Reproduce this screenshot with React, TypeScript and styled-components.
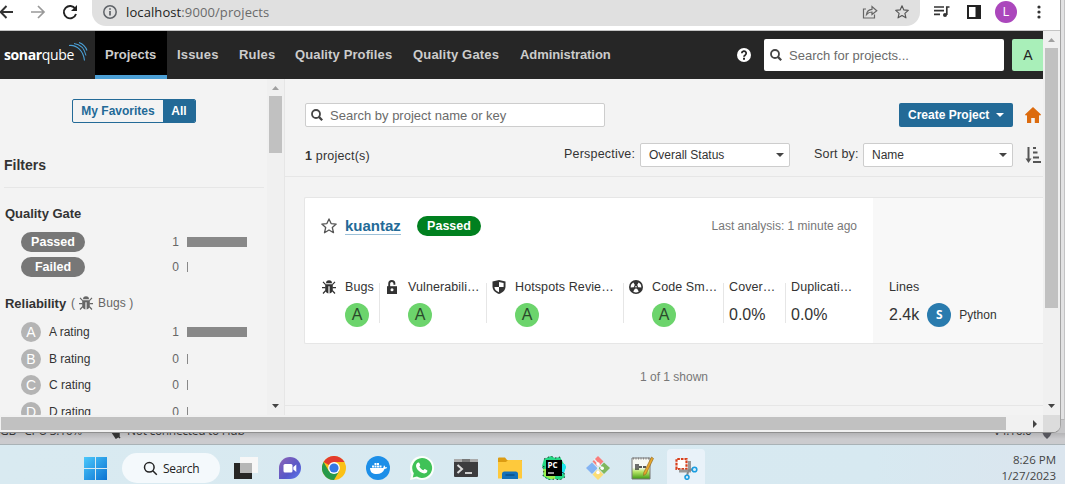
import React from "react";
import styled, { createGlobalStyle, css } from "styled-components";

const Global = createGlobalStyle`
  * { box-sizing: border-box; }
  html, body { margin: 0; padding: 0; overflow: hidden; }
  body { font-family: "Liberation Sans", Arial, sans-serif; font-size: 13px; color: #333; }
  svg { display: block; flex: none; }
`;

const Desktop = styled.div`
  width: 1065px;
  height: 484px;
  display: flex;
  flex-direction: column;
  overflow: hidden;
  background: #c9c9cb;
`;

const WindowRow = styled.div`
  height: 433px;
  flex: none;
  display: flex;
  background: linear-gradient(#d9d9da 0 419px, #c6c6c8 420px);
`;

const BrowserWindow = styled.div`
  width: 1061px;
  height: 433px;
  display: flex;
  flex-direction: column;
  overflow: hidden;
  background: #f1f1f1;
  border-right: 1px solid #a3a3a3;
  border-bottom: 1px solid #8f8f8f;
  border-bottom-right-radius: 8px;
`;

const BackWindowEdge = styled.div`
  width: 4px;
  height: 420px;
  background: #e2e2e3;
  border-right: 1px solid #c3c3c4;
  border-bottom: 1px solid #b5b5b6;
`;

/* Browser toolbar */
const Toolbar = styled.div`
  height: 31px;
  flex: none;
  display: flex;
  align-items: flex-start;
  background: #fff;
  border-bottom: 1px solid #c4c4c4;
`;

const NavButtons = styled.div`
  width: 92px;
  height: 24px;
  display: flex;
  align-items: center;
`;

const AddressBar = styled.div`
  width: 828px;
  height: 26px;
  display: flex;
  align-items: center;
  padding: 0 11px 2px 11px;
  background: #e0e0e0;
  border-radius: 0 0 14px 14px;
`;

const Url = styled.span`
  margin-left: 9px;
  flex: 1;
  font-family: "Open Sans", sans-serif;
  font-size: 13px;
  letter-spacing: 0.1px;
  color: #6a6a6a;
  b { font-weight: 400; color: #222; }
`;

const ToolbarIcons = styled.div`
  flex: 1;
  height: 24px;
  display: flex;
  align-items: center;
  padding-left: 13px;
`;

const Profile = styled.span`
  width: 22px;
  height: 22px;
  margin: 0 20px 0 14px;
  border-radius: 50%;
  background: #ab47bc;
  color: #fff;
  font: 12px/22px Roboto, sans-serif;
  text-align: center;
`;

/* Page */
const PageRow = styled.div`
  height: 384px;
  flex: none;
  display: flex;
`;

const Page = styled.div`
  width: 1043px;
  flex: none;
  display: flex;
  flex-direction: column;
  overflow: hidden;
  background: #f3f3f3;
`;

const Header = styled.header`
  height: 48px;
  flex: none;
  display: flex;
  align-items: center;
  background: #262626;
`;

const Logo = styled.div`
  width: 95px;
  height: 48px;
  flex: none;
  display: flex;
  padding: 11px 0 0 4px;
  color: #fff;
  font: 14px/26px "Open Sans", sans-serif;
  letter-spacing: -0.3px;
  b { font-weight: 700; letter-spacing: -0.4px; }
  svg { margin-left: -6px; }
`;

const NavItem = styled.a<{ $active?: boolean; $w: number; $ls?: number }>`
  width: ${(p) => p.$w}px;
  height: 48px;
  flex: none;
  padding-left: 10px;
  line-height: 47px;
  font-weight: 700;
  letter-spacing: ${(p) => p.$ls ?? 0.18}px;
  white-space: nowrap;
  color: #ccc;
  ${(p) => p.$active && css`background: #000; border-bottom: 4px solid #4b9fd5;`}
`;

const HeaderTools = styled.div`
  flex: none;
  margin-left: auto;
  margin-right: -1px;
  display: flex;
  align-items: center;
`;

const SearchInput = styled.div<{ $w: number; $h: number; $bordered?: boolean }>`
  width: ${(p) => p.$w}px;
  height: ${(p) => p.$h}px;
  display: flex;
  align-items: center;
  gap: 7px;
  padding-left: ${(p) => (p.$bordered ? 5 : 6)}px;
  background: #fff;
  border: ${(p) => (p.$bordered ? "1px solid #cdcdcd" : "none")};
  border-radius: 2px;
  color: #6b6b6b;
`;

const Avatar = styled.span`
  width: 32px;
  height: 32px;
  margin-left: 8px;
  border-radius: 2px;
  background: #a9efb9;
  color: #222;
  font-size: 14px;
  line-height: 32px;
  text-align: center;
`;

const Body = styled.div`
  flex: 1;
  min-height: 0;
  display: flex;
`;

const Sidebar = styled.aside`
  width: 267px;
  flex: none;
  overflow: hidden;
  padding: 20px 3px 0 4px;
`;

const Toggle = styled.div`
  display: flex;
  width: 124px;
  height: 24px;
  margin-left: 68px;
  border: 1px solid #236a97;
  border-radius: 2px;
  overflow: hidden;
  font-size: 12px;
  font-weight: 700;
  line-height: 22px;
  text-align: center;
`;

const ToggleOption = styled.span<{ $on?: boolean }>`
  width: ${(p) => (p.$on ? 32 : 90)}px;
  background: ${(p) => (p.$on ? "#236a97" : "transparent")};
  color: ${(p) => (p.$on ? "#fff" : "#236a97")};
`;

const FiltersTitle = styled.h2`
  height: 65px;
  margin: 0 0 15px;
  padding-top: 34px;
  border-bottom: 1px solid #e6e6e6;
  font-size: 14px;
  line-height: 16px;
`;

const FacetTitle = styled.h3<{ $top?: number }>`
  display: flex;
  align-items: center;
  height: 20px;
  margin: ${(p) => p.$top ?? 0}px 0 0 1px;
  font-size: 13px;
  letter-spacing: -0.03px;
  span { margin-left: 5px; font-weight: 400; font-size: 12px; color: #666; }
  span + svg { margin: 0 5px 0 4px; }
  svg + span { margin-left: 0; letter-spacing: 0.1px; }
`;

const FacetRow = styled.div<{ $h: number }>`
  height: ${(p) => p.$h}px;
  display: flex;
  align-items: center;
  padding-left: 17px;
  font-size: 12px;
`;

const FacetLabel = styled.div`
  width: 138px;
  display: flex;
  align-items: center;
  gap: 8px;
`;

const FacetCount = styled.span`
  width: 20px;
  text-align: right;
  color: #666;
`;

const FacetBar = styled.span<{ $full?: boolean }>`
  width: ${(p) => (p.$full ? 60 : 1)}px;
  height: 10px;
  margin-left: 8px;
  background: #888;
`;

const Pill = styled.span<{ $green?: boolean }>`
  width: 64px;
  height: 20px;
  border-radius: 10px;
  background: ${(p) => (p.$green ? "#00801f" : "#777")};
  color: #fff;
  font-size: 12.5px;
  font-weight: 700;
  line-height: 20px;
  text-align: center;
`;

const Rating = styled.span<{ $size: number; $muted?: boolean }>`
  width: ${(p) => p.$size}px;
  height: ${(p) => p.$size}px;
  flex: none;
  border-radius: 50%;
  background: ${(p) => (p.$muted ? "#b4b4b4" : "#6cd46c")};
  color: ${(p) => (p.$muted ? "#fff" : "#2b4a2b")};
  font-size: ${(p) => (p.$muted ? 14 : 16)}px;
  line-height: ${(p) => p.$size}px;
  text-align: center;
`;

/* Scrollbars */
const VTrack = styled.div`
  width: 17px;
  flex: none;
  display: flex;
  flex-direction: column;
  align-items: center;
  justify-content: space-between;
  padding: 7px 0;
  background: #f0f0f0;
`;

const VThumb = styled.div<{ $h: number }>`
  width: 13px;
  height: ${(p) => p.$h}px;
  margin: 6px 0 auto;
  background: #c1c1c1;
`;

const HScroll = styled.div`
  height: 17px;
  flex: none;
  display: flex;
  align-items: center;
  padding-left: 1px;
`;

const HThumb = styled.div`
  width: 1005px;
  height: 13px;
  background: #c1c1c1;
`;

const ScrollCorner = styled.div`
  width: 17px;
  height: 17px;
  margin-left: auto;
  background: #dcdcdc;
`;

/* Main column */
const Main = styled.main`
  flex: 1;
  min-width: 0;
  border-left: 1px solid #e6e6e6;
  overflow: hidden;
`;

const TopBar = styled.div`
  height: 98px;
  padding: 24px 2px 0 20px;
  border-bottom: 1px solid #e6e6e6;
`;

const BarRow = styled.div`
  height: 24px;
  display: flex;
  align-items: center;
  margin-bottom: 16px;
`;

const CreateButton = styled.button`
  width: 114px;
  height: 24px;
  margin: 0 12px 0 auto;
  padding: 0 9px;
  display: flex;
  align-items: center;
  justify-content: space-between;
  border: 0;
  border-radius: 2px;
  background: #236a97;
  color: #fff;
  font: 700 12px "Liberation Sans", Arial, sans-serif;
  white-space: nowrap;
`;

const ProjectCount = styled.span`
  flex: 1;
  padding-top: 1px;
  font-size: 12.5px;
  letter-spacing: 0.2px;
`;

const FieldLabel = styled.label<{ $w: number }>`
  width: ${(p) => p.$w}px;
  flex: none;
  font-size: 12.5px;
  letter-spacing: 0.2px;
  margin: -2px 2px 0 24px;
  white-space: nowrap;
`;

const Select = styled.div`
  width: 150px;
  height: 24px;
  display: flex;
  align-items: center;
  justify-content: space-between;
  padding: 0 5px 0 8px;
  border: 1px solid #cdcdcd;
  border-radius: 2px;
  background: #fff;
  font-size: 12px;
`;

const Card = styled.article`
  height: 147px;
  margin: 20px 0 0 19px;
  display: flex;
  border: 1px solid #e6e6e6;
  border-right: 0;
  border-radius: 2px 0 0 2px;
  background: #fff;
`;

const CardMain = styled.div`
  width: 568px;
  flex: none;
  padding: 18px 16px 0;
`;

const CardTitle = styled.div`
  height: 20px;
  display: flex;
  align-items: center;
`;

const ProjectLink = styled.a`
  width: 56px;
  margin: 1px 16px 0 8px;
  height: 17px;
  font-size: 15px;
  line-height: 16px;
  font-weight: 700;
  color: #236a97;
  border-bottom: 1px solid #9cc0d8;
`;

const LastAnalysis = styled.span`
  margin-left: auto;
  font-size: 12px;
  color: #777;
`;

const Measures = styled.div`
  display: flex;
  margin-top: 42px;
`;

const Measure = styled.div<{ $w: number; $pad: number; $last?: boolean }>`
  width: ${(p) => p.$w}px;
  height: 50px;
  flex: none;
  display: flex;
  padding-left: ${(p) => p.$pad}px;
  background: ${(p) => (p.$last ? "none" : "linear-gradient(#e6e6e6, #e6e6e6) right 5px / 1px 40px no-repeat")};
  > svg { margin-top: 2px; }
`;

const MeasureBody = styled.div<{ $indent: number }>`
  margin-left: ${(p) => p.$indent}px;
`;

const MeasureName = styled.div`
  height: 17px;
  margin-bottom: 8px;
  line-height: 18px;
  font-size: 12.5px;
  letter-spacing: 0.1px;
  white-space: nowrap;
`;

const MeasureValue = styled.div`
  height: 24px;
  display: flex;
  align-items: center;
  font-size: 16px;
`;

const CardSide = styled.div`
  flex: 1;
  padding: 80px 0 0 16px;
  background: #f8f8f8;
`;

const LangBadge = styled.span`
  width: 24px;
  height: 24px;
  margin: 0 8px;
  border-radius: 50%;
  background: #297bae;
  color: #fff;
  font: 700 12px/24px "Noto Sans", sans-serif;
  text-align: center;
`;

const LangName = styled.span`
  font-size: 12px;
`;

const Shown = styled.div`
  height: 62px;
  padding: 25px 0 0 20px;
  border-bottom: 1px solid #e6e6e6;
  line-height: 16px;
  font-size: 12px;
  text-align: center;
  color: #777;
`;

/* Behind the browser, and the taskbar */
const StatusStrip = styled.div`
  height: 12px;
  flex: none;
  display: flex;
  overflow: hidden;
  background: linear-gradient(#b4b4b6, #cbcbce 6px);
  border-bottom: 1px solid #a9b2b6;
  font: 12px/16px "Open Sans", sans-serif;
  letter-spacing: -0.3px;
  color: #333;
  white-space: pre;
`;

const StripItem = styled.span<{ $w: number }>`
  display: flex;
  width: ${(p) => p.$w}px;
  flex: none;
  margin-top: -10px;
  height: 16px;
`;

const Taskbar = styled.footer`
  flex: 1;
  display: flex;
  align-items: flex-start;
  padding: 4px 9px 0 73px;
  background: linear-gradient(90deg, #d9eaf1 0, #d7e9f1 82%, #dbe5ee 100%);
`;

const Slot = styled.div<{ $active?: boolean }>`
  width: ${(p) => (p.$active ? 38 : 44)}px;
  height: 38px;
  margin: ${(p) => (p.$active ? "0 3px" : "0")};
  display: flex;
  align-items: center;
  justify-content: center;
  border-radius: 4px 4px 0 0;
  background: ${(p) => (p.$active ? "#e9f2f9" : "none")};
`;

const TaskSearch = styled.div`
  width: 98px;
  height: 30px;
  margin: 4px 4px 0 5px;
  display: flex;
  align-items: center;
  padding-left: 21px;
  gap: 5px;
  border-radius: 15px;
  background: #f4f9fc;
  color: #222;
  font: 12px "Open Sans", sans-serif;
  letter-spacing: -0.3px;
`;

const Clock = styled.div`
  margin-left: auto;
  padding-top: 3px;
  text-align: right;
  color: #444;
  font: 11.5px/16px "Open Sans", sans-serif;
`;

const Glass = ({ size = 12, color = "#444" }: { size?: number; color?: string }) => (
  <svg width={size} height={size} viewBox="0 0 12 12" fill="none" stroke={color} strokeWidth="1.800">
    <circle cx="5" cy="5" r="4" />
    <path d="M7.900 7.900L11.200 11.200" strokeWidth="2.200" />
  </svg>
);

const Caret = ({ color = "#444" }: { color?: string }) => (
  <svg width="8" height="4" viewBox="0 0 8 4"><path d="M0 0h8L4 4z" fill={color} /></svg>
);

const Arrow = ({ up, color }: { up?: boolean; color: string }) => (
  <svg width="7" height="4" viewBox="0 0 7 4"><path d={up ? "M0 4L3.5 0L7 4z" : "M0 0h7L3.5 4z"} fill={color} /></svg>
);

const Bug = ({ color = "#333" }: { color?: string }) => (
  <svg width="14" height="14" viewBox="0 0 14 14" fill={color}>
    <path d="M4 3.200a3 3 0 0 1 6 0z" />
    <path d="M3.200 4.200h7.600v5.300c0 2.300-1.500 3.800-3.200 4V6.200H6.400v7.300c-1.700-.2-3.200-1.700-3.200-4z" />
    <path d="M1 1.800L3.600 4.600M13 1.800L10.400 4.600M0 7.600h3.500M14 7.600h-3.500M1 13.500l2.800-3M13 13.500l-2.800-3" stroke={color} strokeWidth="1.200" />
  </svg>
);

const Lock = () => (
  <svg width="12" height="14" viewBox="0 0 12 14">
    <path d="M3.200 7V3.600a2.600 2.600 0 0 1 5.200 0v1.200" fill="none" stroke="#333" strokeWidth="1.900" />
    <path d="M1 6.200h10v7.800H1z" fill="#333" />
    <circle cx="6" cy="9.800" r="1.500" fill="#fff" />
  </svg>
);

const Shield = () => (
  <svg width="14" height="14" viewBox="0 0 14 14">
    <path d="M7 0l6.500 1.600v5C13.500 10.200 10.500 13 7 14 3.500 13 .5 10.200.5 6.600v-5z" fill="#333" />
    <path d="M7 2v5h4.600V3zM7 7H2.400c.1 2.400 2 4.300 4.600 5.200z" fill="#fff" />
  </svg>
);

const Smell = () => (
  <svg width="14" height="14" viewBox="0 0 14 14">
    <circle cx="7" cy="7" r="7" fill="#333" />
    <path d="M7 7L1.700 7.500A5.300 5.300 0 0 1 4.400 2.400zM7 7l5.300.5A5.300 5.300 0 0 0 9.600 2.400zM7 7l-2.800 4.600a5.300 5.300 0 0 0 5.600 0z" fill="#fff" />
    <circle cx="7" cy="6.800" r="2" fill="#333" />
    <circle cx="7" cy="6.800" r=".8" fill="#fff" />
  </svg>
);

const Star = ({ size, color }: { size: number; color: string }) => (
  <svg width={size} height={size} viewBox="0 0 16 16" fill="none" stroke={color} strokeWidth="1.300" strokeLinejoin="round">
    <path d="M8 .9l2.100 4.700 5.100.5-3.900 3.400 1.200 5.200L8 12l-4.500 2.700 1.200-5.200L.8 6.100l5.100-.5z" />
  </svg>
);

const facets = [["A", 1], ["B", 0], ["C", 0], ["D", 0]] as const;

export default function App() {
  return (
    <>
      <Global />
      <Desktop>
        <WindowRow>
          <BrowserWindow>
            <Toolbar>
              <NavButtons>
                <svg width="92" height="24" viewBox="0 0 92 24" fill="none" strokeWidth="1.900">
                  <path d="M13 12H1M6.500 6L.7 12l5.800 6" stroke="#333" />
                  <path d="M31 12h13M38 6l6 6-6 6" stroke="#999" strokeWidth="1.700" />
                  <path d="M75.300 8.800A6.200 6.200 0 1 0 76 14" stroke="#222" />
                  <path d="M77 5v6h-6z" fill="#222" />
                </svg>
              </NavButtons>
              <AddressBar>
                <svg width="14" height="14" viewBox="0 0 14 14" fill="none" stroke="#5f6368" strokeWidth="1.500">
                  <circle cx="7" cy="7" r="6.200" /><path d="M7 6v4.500M7 3.300v1.500" strokeWidth="1.700" />
                </svg>
                <Url><b>localhost</b>:9000/projects</Url>
                <svg width="16" height="14" viewBox="0 0 16 14" fill="none" stroke="#666" strokeWidth="1.200">
                  <path d="M4 4H1.500v9h11V9.500" /><path d="M4.500 9.500C5 6 7 4.500 10 4.300V1.500L14.800 5.700 10 9.500V7C7.500 7 6 7.700 4.500 9.500z" />
                </svg>
                <svg width="17" height="1" />
                <Star size={14} color="#555" />
              </AddressBar>
              <ToolbarIcons>
                <svg width="18" height="14" viewBox="0 0 18 14" fill="none" stroke="#333" strokeWidth="1.700">
                  <path d="M1 2h10M1 5.700h10M1 9.400h6M16.500 2H13.800v8" /><circle cx="12" cy="10" r="2" fill="#333" stroke="none" />
                </svg>
                <svg width="16" height="1" />
                <svg width="14" height="14" viewBox="0 0 14 14"><path d="M0 0h14v14H0zM2 2v10h6.500V2z" fill="#222" fillRule="evenodd" /></svg>
                <Profile>L</Profile>
                <svg width="4" height="14" viewBox="0 0 4 14" fill="#333"><circle cx="2" cy="2" r="1.600" /><circle cx="2" cy="7" r="1.600" /><circle cx="2" cy="12" r="1.600" /></svg>
              </ToolbarIcons>
            </Toolbar>

            <PageRow>
              <Page>
                <Header>
                  <Logo>
                    <b>sonar</b>qube
                    <svg width="20" height="20" viewBox="0 0 20 20" fill="none" stroke="#4b9fd5" strokeWidth="1.100">
                      <path d="M1 3.500C9 2.500 15.500 9 16.500 18.500" /><path d="M6 1.500c6 .8 10.500 5 12 12" /><path d="M11 .5c3.800 1.400 6.500 4 8 8" />
                    </svg>
                  </Logo>
                  <NavItem $active $w={72} $ls={0}>Projects</NavItem>
                  <NavItem $w={62}>Issues</NavItem>
                  <NavItem $w={56}>Rules</NavItem>
                  <NavItem $w={118} $ls={0.12}>Quality Profiles</NavItem>
                  <NavItem $w={107}>Quality Gates</NavItem>
                  <NavItem $w={112} $ls={-0.08}>Administration</NavItem>
                  <HeaderTools>
                    <svg width="27" height="14" viewBox="0 0 27 14">
                      <circle cx="7" cy="7" r="7" fill="#fff" />
                      <path d="M4.800 5.300a2.200 2.200 0 1 1 3.300 1.900C7.300 7.700 7 8 7 8.700" fill="none" stroke="#262626" strokeWidth="1.800" />
                      <path d="M6 9.800h2v1.900H6z" fill="#262626" />
                    </svg>
                    <SearchInput $w={240} $h={32}><Glass />Search for projects...</SearchInput>
                    <Avatar>A</Avatar>
                  </HeaderTools>
                </Header>
                <Body>
                  <Sidebar>
                    <Toggle>
                      <ToggleOption>My Favorites</ToggleOption>
                      <ToggleOption $on>All</ToggleOption>
                    </Toggle>
                    <FiltersTitle>Filters</FiltersTitle>
                    <FacetTitle>Quality Gate</FacetTitle>
                    <svg width="1" height="6" />
                    <FacetRow $h={25}><FacetLabel><Pill>Passed</Pill></FacetLabel><FacetCount>1</FacetCount><FacetBar $full /></FacetRow>
                    <FacetRow $h={25}><FacetLabel><Pill>Failed</Pill></FacetLabel><FacetCount>0</FacetCount><FacetBar /></FacetRow>
                    <FacetTitle $top={14}>Reliability <span>(</span><Bug color="#666" /><span>Bugs )</span></FacetTitle>
                    <svg width="1" height="6" />
                    {facets.map(([r, n]) => (
                      <FacetRow key={r} $h={26.5}>
                        <FacetLabel><Rating $size={20} $muted>{r}</Rating>{r} rating</FacetLabel>
                        <FacetCount>{n}</FacetCount>
                        <FacetBar $full={n > 0} />
                      </FacetRow>
                    ))}
                  </Sidebar>
                  <VTrack><Arrow up color="#a0a0a0" /><VThumb $h={57} /><Arrow color="#444" /></VTrack>
                  <Main>
                    <TopBar>
                      <BarRow>
                        <SearchInput $w={300} $h={24} $bordered><Glass />Search by project name or key</SearchInput>
                        <CreateButton>Create Project <Caret color="#fff" /></CreateButton>
                        <svg width="16" height="16" viewBox="0 0 16 16" fill="#dc6b0e"><path d="M8 0l8 7.500-1 1.300-1-.7V16H9.800v-5H6.200v5H2V8.100l-1 .7-1-1.300z" /></svg>
                      </BarRow>
                      <BarRow>
                        <ProjectCount><b>1</b> project(s)</ProjectCount>
                        <FieldLabel $w={74}>Perspective:</FieldLabel>
                        <Select>Overall Status<Caret /></Select>
                        <FieldLabel $w={47}>Sort by:</FieldLabel>
                        <Select>Name<Caret /></Select>
                        <svg width="28" height="16" viewBox="0 0 28 16" fill="none" stroke="#555" strokeWidth="2">
                          <path d="M15.500 0v14" /><path d="M12.500 11.500h6l-3 4.500z" fill="#555" stroke="none" /><path d="M20 1h3M20 5.500h4.500M20 10.500h6M20 15h8" strokeWidth="1.800" />
                        </svg>
                      </BarRow>
                    </TopBar>
                    <Card>
                      <CardMain>
                        <CardTitle>
                          <Star size={16} color="#555" />
                          <ProjectLink>kuantaz</ProjectLink>
                          <Pill $green>Passed</Pill>
                          <LastAnalysis>Last analysis: 1 minute ago</LastAnalysis>
                        </CardTitle>
                        <Measures>
                          <Measure $w={59} $pad={1}><Bug /><MeasureBody $indent={9}><MeasureName>Bugs</MeasureName><Rating as="div" $size={24}>A</Rating></MeasureBody></Measure>
                          <Measure $w={107} $pad={6}><Lock /><MeasureBody $indent={10}><MeasureName>Vulnerabili…</MeasureName><Rating as="div" $size={24}>A</Rating></MeasureBody></Measure>
                          <Measure $w={137} $pad={5}><Shield /><MeasureBody $indent={9}><MeasureName>Hotspots Revie…</MeasureName><Rating as="div" $size={24}>A</Rating></MeasureBody></Measure>
                          <Measure $w={100} $pad={5}><Smell /><MeasureBody $indent={9}><MeasureName>Code Sm…</MeasureName><Rating as="div" $size={24}>A</Rating></MeasureBody></Measure>
                          <Measure $w={62} $pad={5}><MeasureBody $indent={0}><MeasureName>Cover…</MeasureName><MeasureValue>0.0%</MeasureValue></MeasureBody></Measure>
                          <Measure $w={70} $pad={5} $last><MeasureBody $indent={0}><MeasureName>Duplicati…</MeasureName><MeasureValue>0.0%</MeasureValue></MeasureBody></Measure>
                        </Measures>
                      </CardMain>
                      <CardSide>
                        <MeasureName>Lines</MeasureName>
                        <MeasureValue>2.4k<LangBadge>S</LangBadge><LangName>Python</LangName></MeasureValue>
                      </CardSide>
                    </Card>
                    <Shown>1 of 1 shown</Shown>
                  </Main>
                </Body>
              </Page>
              <VTrack><Arrow up color="#a0a0a0" /><VThumb $h={260} /><Arrow color="#444" /></VTrack>
            </PageRow>
            <HScroll>
              <HThumb />
              <svg width="32" height="8" viewBox="0 0 32 8"><path d="M27 0l4 4-4 4z" fill="#444" /></svg>
              <ScrollCorner />
            </HScroll>
          </BrowserWindow>
          <BackWindowEdge />
        </WindowRow>
        <StatusStrip>
          <StripItem $w={109}>GB   CPU 3.16%</StripItem>
          <StripItem $w={18}>
            <svg width="12" height="16" viewBox="0 0 12 16"><path d="M1 5l10 10M3 9h7v4L7 15z" stroke="#333" strokeWidth="1.500" fill="#333" /></svg>
          </StripItem>
          <StripItem $w={867}>Not connected to Hub</StripItem>
          <StripItem $w={47}>v4.16.0</StripItem>
          <StripItem $w={12}><svg width="12" height="16" viewBox="0 0 12 16"><path d="M1 9h10l-2 4-3 3L3 13z" fill="#55555c" /></svg></StripItem>
        </StatusStrip>
        <Taskbar>
          <Slot>
            <svg width="23" height="23" viewBox="0 0 23 23">
              <defs><linearGradient id="win" x1="0" y1="0" x2="1" y2="1" gradientUnits="objectBoundingBox"><stop stopColor="#4cc8fb" /><stop offset="1" stopColor="#0a72d2" /></linearGradient></defs>
              <path d="M0 0h11v11H0zM12 0h11v11H12zM0 12h11v11H0zM12 12h11v11H12z" fill="url(#win)" />
            </svg>
          </Slot>
          <TaskSearch>
            <svg width="15" height="15" viewBox="0 0 15 15" fill="none" stroke="#222" strokeWidth="1.500"><circle cx="6.300" cy="6.300" r="4.800" /><path d="M9.800 9.800l4 4" /></svg>
            Search
          </TaskSearch>
          <Slot>
            <svg width="24" height="23" viewBox="0 0 24 23"><path d="M0 6h18v16H0z" fill="#262625" /><path d="M6 0h18v16H6z" fill="#f7f7f7" /><path d="M6 6h12v10H6z" fill="#b6b7b7" /></svg>
          </Slot>
          <Slot>
            <svg width="24" height="24" viewBox="0 0 24 24">
              <defs><linearGradient id="chat" x1="0" y1="0" x2="1" y2="1"><stop stopColor="#8e63b4" /><stop offset=".6" stopColor="#5757c9" /><stop offset="1" stopColor="#5c7df0" /></linearGradient></defs>
              <path d="M12 1a11 11 0 1 1 0 22H1V12A11 11 0 0 1 12 1z" fill="url(#chat)" />
              <rect x="5.500" y="8" width="9" height="8.500" rx="1.500" fill="#fff" /><path d="M15.300 11l3-2.500v7.500l-3-2.500z" fill="#fff" />
            </svg>
          </Slot>
          <Slot>
            <svg width="24" height="24" viewBox="0 0 24 24">
              <circle cx="12" cy="12" r="12" fill="#fbc116" />
              <path d="M12 12L1.600 6A12 12 0 0 1 22.400 6H12z" fill="#e33b2e" />
              <path d="M1.600 6A12 12 0 0 0 12 24l5.200-9L12 12 6.800 15z" fill="#27994a" />
              <circle cx="12" cy="12" r="5.900" fill="#fff" /><circle cx="12" cy="12" r="4.600" fill="#3478e5" />
            </svg>
          </Slot>
          <Slot>
            <svg width="24" height="24" viewBox="0 0 24 24" fill="#fff">
              <circle cx="12" cy="12" r="12" fill="#1d8fe8" />
              <path d="M4 12h13c.8-.5.500-2 1-2.800.8.500 1.200 1.200 1.200 2 .9-.1 1.600 0 2 .4-.5 1-1.500 1.400-2.700 1.400-1.300 3.600-4 5-7.800 5-4 0-6.500-1.500-6.700-6z" />
              <path d="M6 9.500h2v2H6zM8.500 9.500h2v2h-2zM11 9.500h2v2h-2zM13.500 9.500h2v2h-2zM8.500 7h2v2h-2zM11 7h2v2h-2z" />
            </svg>
          </Slot>
          <Slot>
            <svg width="24" height="24" viewBox="0 0 24 24">
              <path d="M12 0a12 12 0 1 1-5.600 22.600L0 24l1.500-6A12 12 0 0 1 12 0z" fill="#fafffb" />
              <path d="M12 2a10 10 0 1 1-5 18.600L2.800 21.500l1-4.200A10 10 0 0 1 12 2z" fill="#3fc257" />
              <path d="M8 6.500c.8-.3 1.200 0 1.400.6l.8 1.900c.1.500-.5 1-.9 1.500 1 1.900 2.300 3 4.200 3.800.5-.5.900-1.300 1.400-1.200l2.200 1.100c.5.300.3 1-.1 1.800-1 1.500-2.800 1.700-4.500 1.100-3.300-1.100-5.500-3.300-6.300-6C5.700 9 6.500 7.200 8 6.500z" fill="#fff" />
            </svg>
          </Slot>
          <Slot>
            <svg width="24" height="20" viewBox="0 0 24 20"><rect y="1" width="24" height="18" rx="1" fill="#3c3c3e" /><path d="M0 1h24v3H0z" fill="#aaa" /><path d="M8 1h8v3H8z" fill="#777" /><path d="M3.500 7l4.500 4-4.500 4" fill="none" stroke="#ddd" strokeWidth="2" /><path d="M11 15h7" stroke="#fff" strokeWidth="1.500" /></svg>
          </Slot>
          <Slot>
            <svg width="24" height="22" viewBox="0 0 24 22"><path d="M0 1.500Q0 .5 1 .5h6l2 2.500h15v4H0z" fill="#dc9c13" /><path d="M0 5h8l2-2h13q1 0 1 1v17.500H0z" fill="#fec93c" /><path d="M4 22v-5q0-2.500 2.500-2.500h11Q20 14.500 20 17v5z" fill="#1470b9" /><path d="M7.500 18h9" stroke="#0a4c85" strokeWidth="1.400" /></svg>
          </Slot>
          <Slot>
            <svg width="24" height="24" viewBox="0 0 24 24">
              <path d="M2 3l7-3 4 2 5-1 4 7 2 3-2 5 1 5-5 3-5-1-6 1-6-4 1-6-2-4z" fill="#24d884" />
              <path d="M19 8h4l1 3-2 6-3 2z" fill="#1be5f0" /><path d="M1 13l3 0v7h9v3l-5 0-6-3z" fill="#9af04c" />
              <path d="M2 3l7-3 4 2 5-1 1 4M22 17l1 4-5 3-5-1-6 1-6-4 1-6-2-4z" fill="none" stroke="#111" strokeWidth=".8" strokeDasharray="1.500 2.500" />
              <path d="M4 4h16v16H4z" fill="#000" /><path d="M6 17h6" stroke="#fff" strokeWidth="1.200" />
              <text x="5.500" y="12.300" fontSize="8" fontWeight="700" fill="#fff" fontFamily="Open Sans, sans-serif">PC</text>
            </svg>
          </Slot>
          <Slot>
            <svg width="24" height="24" viewBox="0 0 24 24">
              <path d="M12 0l5.500 5.500L12 11 6.500 5.500z" fill="#fa7d7b" /><path d="M18 6.500l6 5.500-6 6-5.500-5.800z" fill="#80b75d" /><path d="M12 13l5.500 5.500L12 24l-5.500-5.500z" fill="#fbdd75" /><path d="M6 6.500l5.500 5.700L6 18 0 12z" fill="#83b3f3" />
              <path d="M8 3l4 4.500v9M12 8l4 4" stroke="#e9f2f6" strokeWidth="1.400" fill="none" /><g fill="#fff"><circle cx="12" cy="8" r="1.800" /><circle cx="12" cy="16.500" r="1.800" /><circle cx="16.200" cy="12.200" r="1.800" /></g>
            </svg>
          </Slot>
          <Slot>
            <svg width="24" height="24" viewBox="0 0 24 24">
              <defs><linearGradient id="npp" x1="0" y1="0" x2="0" y2="1"><stop offset=".45" stopColor="#f6f8f2" /><stop offset=".65" stopColor="#b9e668" /><stop offset="1" stopColor="#3e9a13" /></linearGradient></defs>
              <path d="M2 2h18v21H2z" fill="url(#npp)" stroke="#777" /><path d="M3 2.500h16" stroke="#888" strokeWidth="2" strokeDasharray="1 1.500" />
              <path d="M6 8v6M8 8v6M9 11h3M13 11h3" stroke="#222" strokeWidth="1.300" />
              <path d="M21.500 1l2 1.500L16 18l-2.500 1.500.3-3z" fill="#e7a72c" stroke="#8a621d" strokeWidth=".6" />
            </svg>
          </Slot>
          <Slot $active>
            <svg width="24" height="24" viewBox="0 0 24 24" fill="none">
              <path d="M2.500 13V3h10v10z" fill="#fff" stroke="#d8401c" strokeWidth="2.200" strokeDasharray="2.600 1" />
              <path d="M5 15h10.500V5" stroke="#999" strokeWidth="3" /><path d="M14 15l5-2M14 16l-1 4" stroke="#888" strokeWidth="2" />
              <circle cx="20.500" cy="13.500" r="2.300" stroke="#1b9de0" strokeWidth="1.600" fill="#d6effc" /><circle cx="13" cy="21.300" r="2" stroke="#1b9de0" strokeWidth="1.600" fill="#d6effc" />
            </svg>
          </Slot>
          <Clock>8:26 PM<br />1/27/2023</Clock>
        </Taskbar>
      </Desktop>
    </>
  );
}
